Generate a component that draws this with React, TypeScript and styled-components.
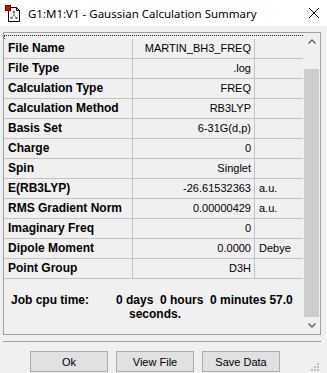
import React from "react";
import styled, { createGlobalStyle } from "styled-components";

const Global = createGlobalStyle`
  html, body { margin: 0; padding: 0; background: #f0f0f0; }
  body { font-family: "Liberation Sans", Arial, sans-serif; color: #000; }
  * { box-sizing: border-box; }
`;

const Window = styled.div`
  position: relative;
  width: 327px;
  height: 373px;
  background: #f0f0f0;
  display: flex;
  flex-direction: column;
  overflow: hidden;
`;

const TitleBar = styled.div`
  height: 26px;
  background: #ffffff;
  display: flex;
  align-items: center;
  padding-left: 5px;
  flex-shrink: 0;
`;

const TitleText = styled.div`
  margin-left: 6px;
  font-family: "Noto Sans", "Open Sans", sans-serif;
  font-size: 11.5px;
  color: #000;
  white-space: nowrap;
  flex: 1;
`;

const CloseBox = styled.div`
  width: 46px;
  height: 26px;
  display: flex;
  align-items: center;
  justify-content: center;
  margin-right: -10px;
`;

const Body = styled.div`
  padding: 0 6px 0 3px;
  display: flex;
  flex-direction: column;
`;

const Panel = styled.div`
  margin-top: 6px;
  height: 303px;
  border: 1px solid #a0a0a0;
  display: flex;
  background: #f0f0f0;
`;

const Content = styled.div`
  flex: 1;
  min-width: 0;
  overflow: hidden;
  display: flex;
  flex-direction: column;
`;

const FocusEdge = styled.div`
  margin-top: 2px;
  height: 4px;
  border-top: 1px dotted #222;
  border-left: 1px dotted #222;
  flex-shrink: 0;
`;

const Grid = styled.div`
  display: grid;
  grid-template-columns: 129px 122px 1fr;
`;

const Cell = styled.div<{ $kind: "label" | "value" | "unit" }>`
  height: 20px;
  line-height: 19px;
  border-bottom: 1px solid #c3c3c3;
  border-right: ${(p) => (p.$kind === "unit" ? "none" : "1px solid #c3c3c3")};
  white-space: nowrap;
  overflow: hidden;
  font-size: ${(p) => (p.$kind === "label" ? "12px" : "11px")};
  font-weight: ${(p) => (p.$kind === "label" ? 700 : 400)};
  text-align: ${(p) => (p.$kind === "value" ? "right" : "left")};
  padding: ${(p) =>
    p.$kind === "label" ? "0 0 0 4px" : p.$kind === "value" ? "0 3px 0 0" : "0 0 0 4px"};
`;

const CpuBlock = styled.div`
  margin-top: 14px;
  display: flex;
  font-size: 12px;
  font-weight: 700;
  line-height: 14px;
`;

const CpuLabel = styled.div`
  width: 112px;
  padding-left: 7px;
`;

const CpuValue = styled.div`
  display: flex;
  flex-direction: column;
  white-space: pre;
`;

const CpuLine = styled.div<{ $indent?: number }>`
  padding-left: ${(p) => p.$indent ?? 0}px;
`;

const ScrollBar = styled.div`
  width: 17px;
  display: flex;
  flex-direction: column;
  background: #f0f0f0;
`;

const ScrollArrow = styled.div`
  height: 17px;
  display: flex;
  align-items: center;
  justify-content: center;
  flex-shrink: 0;
`;

const Track = styled.div`
  flex: 1;
  display: flex;
  flex-direction: column;
`;

const Thumb = styled.div`
  margin: 19px 1px 0 1px;
  height: 248px;
  background: #cdcdcd;
`;

const Separator = styled.div`
  margin-top: 6px;
  height: 1px;
  background: #a0a0a0;
`;

const ButtonRow = styled.div`
  margin-top: 9px;
  padding-left: 27px;
  display: flex;
  gap: 8px;
`;

const Button = styled.button`
  width: 78px;
  height: 21px;
  padding: 0;
  background: #e1e1e1;
  border: 1px solid #adadad;
  font-family: "Liberation Sans", Arial, sans-serif;
  font-size: 11px;
  color: #000;
  display: flex;
  align-items: center;
  justify-content: center;
`;

const Grip = styled.svg`
  position: absolute;
  right: 8px;
  bottom: 2px;
`;

const rows: [string, string, string][] = [
  ["File Name", "MARTIN_BH3_FREQ", ""],
  ["File Type", ".log", ""],
  ["Calculation Type", "FREQ", ""],
  ["Calculation Method", "RB3LYP", ""],
  ["Basis Set", "6-31G(d,p)", ""],
  ["Charge", "0", ""],
  ["Spin", "Singlet", ""],
  ["E(RB3LYP)", "-26.61532363", "a.u."],
  ["RMS Gradient Norm", "0.00000429", "a.u."],
  ["Imaginary Freq", "0", ""],
  ["Dipole Moment", "0.0000", "Debye"],
  ["Point Group", "D3H", ""],
];

const AppIcon = () => (
  <svg width="17" height="17" viewBox="0 0 17 17">
    <path d="M3.5 2.5 H11.5 L14.5 5.5 V16.5 H3.5 Z" fill="#fff" stroke="#000" strokeWidth="1" />
    <path d="M11.5 2.5 V5.5 H14.5" fill="none" stroke="#000" strokeWidth="1" />
    <line x1="9" y1="10" x2="9" y2="7" stroke="#8a8a8a" strokeWidth="1" />
    <line x1="9" y1="10" x2="6.5" y2="13" stroke="#8a8a8a" strokeWidth="1" />
    <line x1="9" y1="10" x2="11.5" y2="13" stroke="#8a8a8a" strokeWidth="1" />
    <circle cx="9" cy="7" r="1.3" fill="#7a7a7a" />
    <circle cx="6.5" cy="13" r="1.3" fill="#7a7a7a" />
    <circle cx="11.5" cy="13" r="1.3" fill="#7a7a7a" />
    <circle cx="9" cy="10" r="1.1" fill="#9a9a9a" />
    <rect x="0.5" y="0.5" width="5" height="5" fill="#e00000" stroke="#700000" strokeWidth="1" />
  </svg>
);

const CloseIcon = () => (
  <svg width="10" height="10" viewBox="0 0 10 10">
    <path d="M0 0 L10 10 M10 0 L0 10" stroke="#000" strokeWidth="1" />
  </svg>
);

const Chevron = ({ up }: { up?: boolean }) => (
  <svg width="8" height="5" viewBox="0 0 8 5">
    <path
      d={up ? "M0.5 4.5 L4 1 L7.5 4.5" : "M0.5 0.5 L4 4 L7.5 0.5"}
      fill="none"
      stroke="#606060"
      strokeWidth="1.4"
    />
  </svg>
);

export default function App() {
  return (
    <Window>
      <Global />
      <TitleBar>
        <AppIcon />
        <TitleText>G1:M1:V1 - Gaussian Calculation Summary</TitleText>
        <CloseBox>
          <CloseIcon />
        </CloseBox>
      </TitleBar>
      <Body>
        <Panel>
          <Content>
            <FocusEdge />
            <Grid>
              {rows.map(([label, value, unit]) => (
                <React.Fragment key={label}>
                  <Cell $kind="label">{label}</Cell>
                  <Cell $kind="value">{value}</Cell>
                  <Cell $kind="unit">{unit}</Cell>
                </React.Fragment>
              ))}
            </Grid>
            <CpuBlock>
              <CpuLabel>Job cpu time:</CpuLabel>
              <CpuValue>
                <CpuLine>{"0 days  0 hours  0 minutes 57.0"}</CpuLine>
                <CpuLine $indent={13}>seconds.</CpuLine>
              </CpuValue>
            </CpuBlock>
          </Content>
          <ScrollBar>
            <ScrollArrow>
              <Chevron up />
            </ScrollArrow>
            <Track>
              <Thumb />
            </Track>
            <ScrollArrow>
              <Chevron />
            </ScrollArrow>
          </ScrollBar>
        </Panel>
        <Separator />
        <ButtonRow>
          <Button>Ok</Button>
          <Button>View File</Button>
          <Button>Save Data</Button>
        </ButtonRow>
      </Body>
      <Grip width="9" height="9" viewBox="0 0 9 9">
        {[
          [7, 1],
          [4, 4],
          [7, 4],
          [1, 7],
          [4, 7],
          [7, 7],
        ].map(([x, y]) => (
          <rect key={`${x}-${y}`} x={x} y={y} width="2" height="2" fill="#bcbcbc" />
        ))}
      </Grip>
    </Window>
  );
}
